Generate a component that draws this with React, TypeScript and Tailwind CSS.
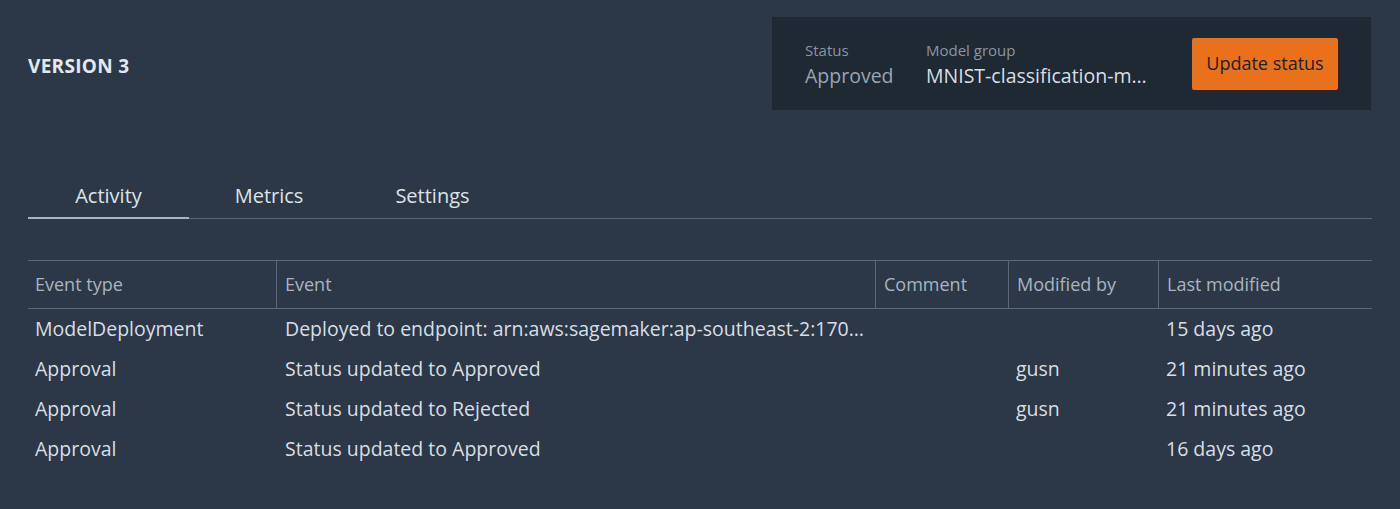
import React from "react";

type Row = {
  type: string;
  event: string;
  comment: string;
  by: string;
  modified: string;
};

const rows: Row[] = [
  {
    type: "ModelDeployment",
    event: "Deployed to endpoint: arn:aws:sagemaker:ap-southeast-2:170923456789:endpoint/mnist-classification",
    comment: "",
    by: "",
    modified: "15 days ago",
  },
  { type: "Approval", event: "Status updated to Approved", comment: "", by: "gusn", modified: "21 minutes ago" },
  { type: "Approval", event: "Status updated to Rejected", comment: "", by: "gusn", modified: "21 minutes ago" },
  { type: "Approval", event: "Status updated to Approved", comment: "", by: "", modified: "16 days ago" },
];

const columns = ["Event type", "Event", "Comment", "Modified by", "Last modified"];
const tabs = ["Activity", "Metrics", "Settings"];

export default function App() {
  return (
    <div
      className="w-[1400px] h-[509px] overflow-hidden bg-[#2c3847] text-[#d8dee4]"
      style={{ fontFamily: '"Open Sans", "Noto Sans", sans-serif' }}
    >
      {/* Header */}
      <div className="flex items-center justify-between pl-[28px] pr-[29px] pt-[17px]">
        <h1 className="mt-[5px] text-[19px] font-bold tracking-[0.3px] text-[#e3e8ed]">VERSION 3</h1>
        <div className="flex items-center w-[599px] h-[93px] bg-[#1f2934] pl-[33px] pr-[33px]">
          <div className="flex flex-col gap-[3px] pt-[2px] w-[121px]">
            <span className="text-[15px] leading-[20px] text-[#8b96a3]">Status</span>
            <span className="text-[19.5px] leading-[26px] text-[#9aa5b1]">Approved</span>
          </div>
          <div className="flex flex-col gap-[3px] pt-[2px] w-[231px]">
            <span className="text-[15px] leading-[20px] text-[#8b96a3]">Model group</span>
            <span className="text-[19.5px] leading-[26px] text-[#d8dee4] truncate">
              MNIST-classification-model-group
            </span>
          </div>
          <button className="ml-auto w-[146px] h-[52px] rounded-[2px] bg-[#e9711c] text-[18px] text-[#1a2330]">
            Update status
          </button>
        </div>
      </div>

      {/* Tabs */}
      <div className="mx-[28px] mt-[72px] flex border-b border-[#5c6877]">
        {tabs.map((t, i) => (
          <div
            key={t}
            className={`flex justify-center leading-[28px] pb-[7px] text-[20px] text-[#dde3e9] ${
              i === 0 ? "w-[161px] border-b-2 border-[#aab4bf] -mb-[1px]" : i === 1 ? "w-[160px]" : "w-[167px]"
            }`}
          >
            {t}
          </div>
        ))}
      </div>

      {/* Table */}
      <div className="mx-[28px] mt-[41px]">
        <div className="grid grid-cols-[248px_599px_133px_150px_1fr] border-t border-b border-[#5c6877]">
          {columns.map((c, i) => (
            <div
              key={c}
              className={`h-[47px] flex items-center px-[8px] text-[18px] text-[#a9b4c0] ${
                i > 0 ? "border-l border-[#5c6877]" : "pl-[7px]"
              }`}
            >
              {c}
            </div>
          ))}
        </div>
        {rows.map((r, idx) => (
          <div key={idx} className="grid grid-cols-[248px_599px_133px_150px_1fr] h-[40px] items-center text-[19.5px]">
            <div className="pl-[7px] pr-[8px] truncate">{r.type}</div>
            <div className="pl-[9px] pr-[8px] truncate">{r.event}</div>
            <div className="pl-[9px] pr-[8px] truncate">{r.comment}</div>
            <div className="pl-[8px] pr-[8px] truncate">{r.by}</div>
            <div className="pl-[8px] pr-[8px] truncate">{r.modified}</div>
          </div>
        ))}
      </div>
    </div>
  );
}
